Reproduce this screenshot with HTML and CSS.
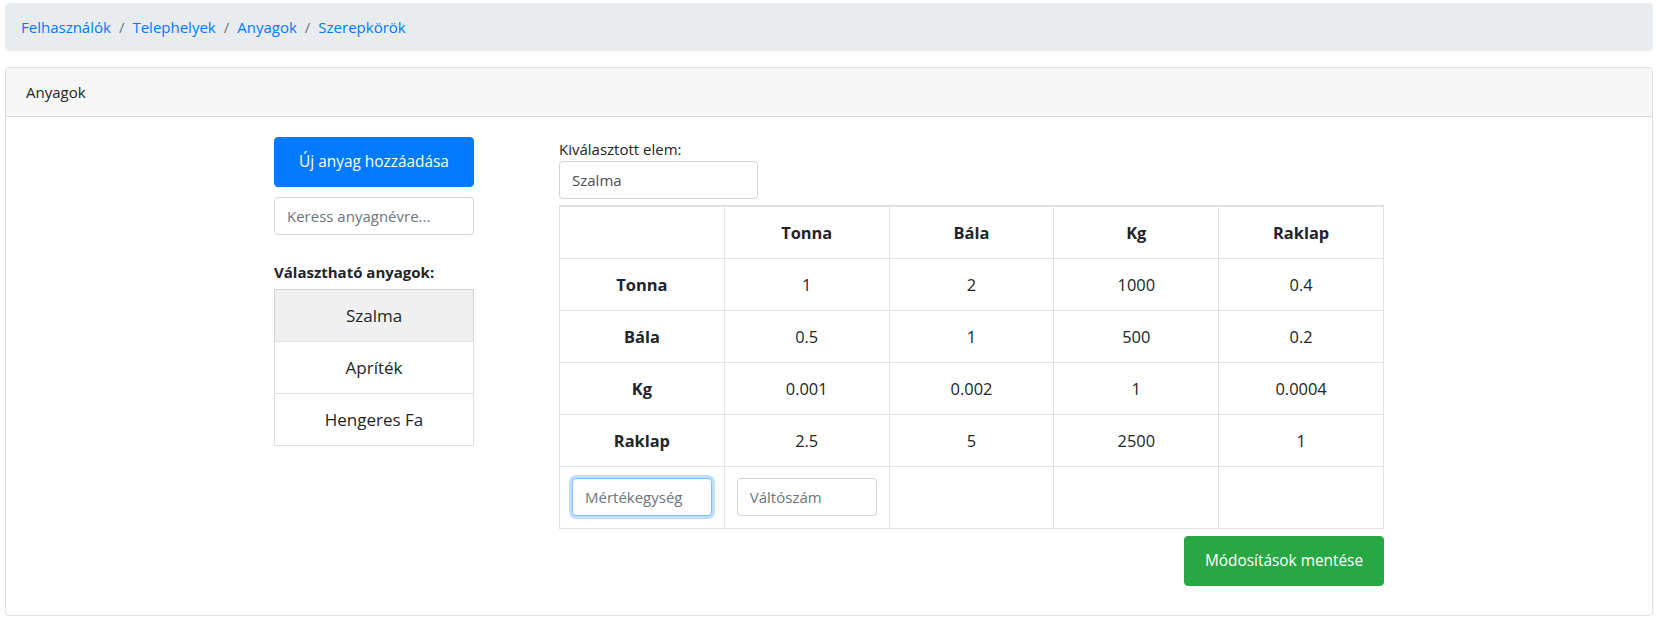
FILE: index.html
```html
<!DOCTYPE html>
<html lang="hu">
<head>
<meta charset="utf-8">
<title>Anyagok</title>
<link rel="stylesheet" href="styles.css">
</head>
<body>
<div class="page">
  <nav class="breadcrumb">
    <a class="crumb" href="#">Felhasználók</a>
    <span class="sep">/</span>
    <a class="crumb" href="#">Telephelyek</a>
    <span class="sep">/</span>
    <a class="crumb" href="#">Anyagok</a>
    <span class="sep">/</span>
    <a class="crumb" href="#">Szerepkörök</a>
  </nav>

  <section class="card">
    <header class="card-header">Anyagok</header>
    <div class="card-body">
      <div class="left-col">
        <button class="btn btn-primary btn-block">Új anyag hozzáadása</button>
        <input class="form-control search" type="text" placeholder="Keress anyagnévre...">
        <div class="list-label">Választható anyagok:</div>
        <ul class="list-group">
          <li class="list-item active">Szalma</li>
          <li class="list-item">Apríték</li>
          <li class="list-item">Hengeres Fa</li>
        </ul>
      </div>
      <div class="right-col">
        <label class="sel-label">Kiválasztott elem:</label>
        <input class="form-control sel-input" type="text" value="Szalma">
        <table class="conv-table">
          <thead>
            <tr>
              <th></th><th>Tonna</th><th>Bála</th><th>Kg</th><th>Raklap</th>
            </tr>
          </thead>
          <tbody>
            <tr><th>Tonna</th><td>1</td><td>2</td><td>1000</td><td>0.4</td></tr>
            <tr><th>Bála</th><td>0.5</td><td>1</td><td>500</td><td>0.2</td></tr>
            <tr><th>Kg</th><td>0.001</td><td>0.002</td><td>1</td><td>0.0004</td></tr>
            <tr><th>Raklap</th><td>2.5</td><td>5</td><td>2500</td><td>1</td></tr>
            <tr class="input-row">
              <td><input class="form-control focused" type="text" placeholder="Mértékegység"></td>
              <td><input class="form-control" type="text" placeholder="Váltószám"></td>
              <td></td><td></td><td></td>
            </tr>
          </tbody>
        </table>
        <div class="save-row">
          <button class="btn btn-success">Módosítások mentése</button>
        </div>
      </div>
    </div>
  </section>
</div>
</body>
</html>
```

FILE: styles.css
```css
* { box-sizing: border-box; }
html, body { margin: 0; padding: 0; background: #fff; }
body {
  font-family: "Open Sans", "Noto Sans", "Liberation Sans", sans-serif;
  font-size: 15px;
  line-height: 24px;
  color: #212529;
}
.page { padding: 3px 10px 0 5px; }

.breadcrumb {
  display: flex;
  align-items: center;
  background: #e9ecef;
  border-radius: 4px;
  padding: 12px 16px;
  margin-bottom: 16px;
  height: 48px;
}
.crumb { color: #007bff; text-decoration: none; }
.sep { color: #6c757d; padding: 0 8px; }

.card {
  border: 1px solid rgba(0,0,0,.125);
  border-radius: 4px;
}
.card-header {
  background: #f7f7f7;
  border-bottom: 1px solid rgba(0,0,0,.125);
  padding: 12px 20px;
  height: 49px;
  border-radius: 3px 3px 0 0;
}
.card-body {
  display: flex;
  justify-content: center;
  gap: 85px;
  padding: 20px 20px 29px;
}

.left-col { width: 200px; display: flex; flex-direction: column; }
.right-col { width: 825px; display: flex; flex-direction: column; }

.btn {
  font: inherit;
  font-size: 15.4px;
  border: 1px solid transparent;
  border-radius: 4px;
  padding: 12px 12px;
  line-height: 24px;
  height: 50px;
  color: #fff;
  cursor: pointer;
}
.btn-primary { background: #007bff; border-color: #007bff; }
.btn-success { background: #28a745; border-color: #28a745; width: 200px; }
.btn-block { width: 100%; }

.form-control {
  font: inherit;
  color: #495057;
  height: 38px;
  padding: 6px 12px;
  border: 1px solid #ced4da;
  border-radius: 4px;
  background: #fff;
  width: 100%;
  outline: none;
}
.form-control::placeholder { color: #6c757d; }
.search { margin-top: 10px; }
.focused {
  border-color: #80bdff;
  box-shadow: 0 0 0 3px rgba(0,123,255,.25);
}

.list-label { font-weight: 700; margin-top: 25px; margin-bottom: 5px; }
.list-group { list-style: none; margin: 0; padding: 0; }
.list-item {
  text-align: center;
  font-size: 17px;
  padding: 12px 20px;
  line-height: 27px;
  border: 1px solid rgba(0,0,0,.125);
  margin-top: -1px;
  background: #fff;
}
.list-item:first-child { margin-top: 0; }
.list-item.active { background: #f0f0f0; }

.sel-label { display: block; }
.sel-input { width: 199px; }

.conv-table {
  margin-top: 6px;
  width: 825px;
  border-collapse: separate;
  border-spacing: 0;
  table-layout: fixed;
  border-left: 1px solid #dee2e6;
  border-top: 2px solid #dee2e6;
  font-size: 16.4px;
}
.conv-table th, .conv-table td {
  border-right: 1px solid #dee2e6;
  border-bottom: 1px solid #dee2e6;
  padding: 12px;
  line-height: 27px;
  text-align: center;
  vertical-align: middle;
}
.conv-table th { font-weight: 700; }
.conv-table td { font-weight: 400; }
.input-row td { padding: 11px 12px 12px; height: 61px; font-size: 15px; }

.save-row { display: flex; justify-content: flex-end; margin-top: 7px; }
```
